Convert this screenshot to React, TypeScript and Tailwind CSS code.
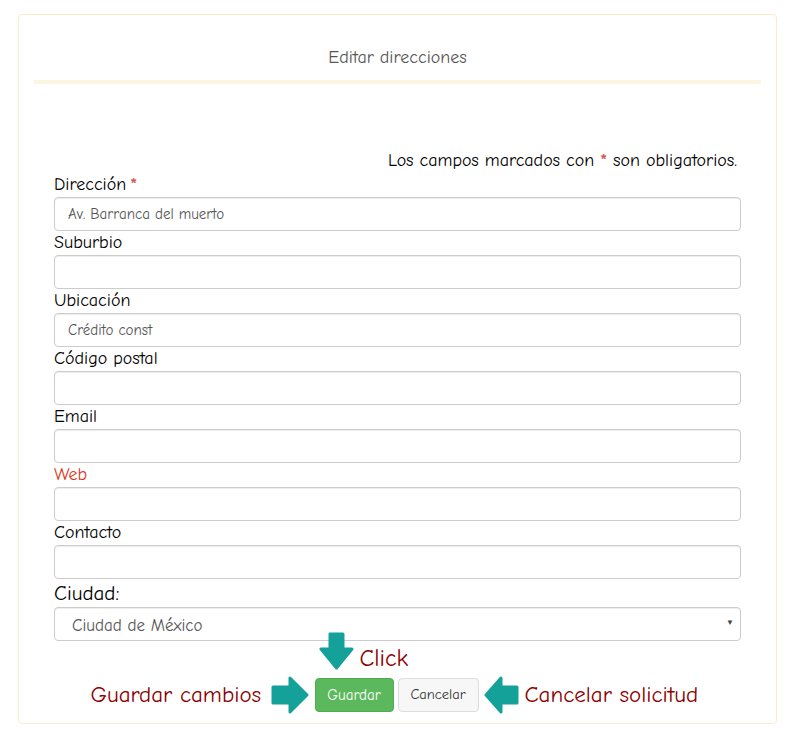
import React from 'react';

const fields = [
  { label: 'Dirección', value: 'Av. Barranca del muerto', required: true },
  { label: 'Suburbio', value: '' },
  { label: 'Ubicación', value: 'Crédito const' },
  { label: 'Código postal', value: '' },
  { label: 'Email', value: '' },
  { label: 'Web', value: '', web: true },
  { label: 'Contacto', value: '' },
];

function DownArrow() {
  return (
    <svg width="35" height="38" viewBox="0 0 35 38">
      <path d="M11 2 H24 V17 H33 L17.5 36 L2 17 H11 Z" fill="#14a19a" stroke="#14a19a" strokeWidth="3" strokeLinejoin="round" />
    </svg>
  );
}

function RightArrow() {
  return (
    <svg width="38" height="38" viewBox="0 0 38 38">
      <path d="M2 11 V27 H19 V36 L36 19 L19 2 V11 Z" fill="#14a19a" stroke="#14a19a" strokeWidth="3" strokeLinejoin="round" />
    </svg>
  );
}

function LeftArrow() {
  return (
    <svg width="35" height="38" viewBox="0 0 35 38">
      <path d="M33 11 V27 H17 V36 L2 19 L17 2 V11 Z" fill="#14a19a" stroke="#14a19a" strokeWidth="3" strokeLinejoin="round" />
    </svg>
  );
}

export default function App() {
  return (
    <div className="min-h-[741px] bg-white pt-[14px] font-['Comic_Sans_MS','Comic_Neue','Open_Sans',sans-serif] text-black">
      <div className="ml-[18px] w-[759px] h-[710px] border border-[#faebcc] rounded bg-white">
        <div className="mx-[15px] pt-[31px] pb-[10px] border-b-4 border-[#fcf5e0] text-center text-[18px] leading-6 text-[#555]">
          Editar direcciones
        </div>

        <div className="px-[35px] pt-[65px]">
          <p className="h-6 pr-1 text-right text-[18px] leading-6 whitespace-nowrap">
            Los campos marcados con <span className="text-[#d9534f] font-bold">*</span> son obligatorios.
          </p>

          {fields.map((f) => (
            <div key={f.label}>
              <label className={`block text-[18px] leading-6 ${f.web ? 'text-[#e0361c]' : 'text-black'}`}>
                {f.label}
                {f.required && <span className="ml-1 text-[#d9534f] font-bold">*</span>}
              </label>
              <input
                readOnly
                value={f.value}
                className="block w-full h-[34px] px-[13px] border border-[#ccc] rounded bg-white text-[15px] text-[#555] shadow-[inset_0_1px_1px_rgba(0,0,0,0.075)] outline-none"
              />
            </div>
          ))}

          <label className="block text-[21px] leading-[28px]">Ciudad:</label>
          <div className="relative h-[34px] border border-[#ccc] rounded bg-white shadow-[inset_0_1px_1px_rgba(0,0,0,0.075)]">
            <span className="absolute left-[17px] top-[5px] text-[17px] text-[#555]">Ciudad de México</span>
            <span className="absolute right-[6px] top-[9px] text-[8px] text-[#444]">▼</span>
          </div>

          <div className="mt-[35px] flex items-center justify-center">
            <span className="w-[170px] text-right text-[23px] leading-[34px] text-[#8b0000] whitespace-nowrap">Guardar cambios</span>
            <span className="ml-[10px] mr-[6px] flex"><RightArrow /></span>
            <div className="relative">
              <div className="absolute left-[4px] top-[-46px] flex">
                <DownArrow />
              </div>
              <span className="absolute left-[45px] top-[-36px] text-[24px] leading-8 text-[#8b0000]">Click</span>
              <button className="w-[79px] h-[34px] rounded bg-[#5cb85c] border border-[#4cae4c] text-[15px] text-white">
                Guardar
              </button>
            </div>
            <button className="ml-1 w-[81px] h-[34px] rounded bg-[#f7f7f7] border border-[#ddd] text-[14.5px] text-[#333]">
              Cancelar
            </button>
            <span className="ml-[5px] mr-[6px] flex"><LeftArrow /></span>
            <span className="w-[180px] text-left text-[23px] leading-[34px] text-[#8b0000] whitespace-nowrap">Cancelar solicitud</span>
          </div>
        </div>
      </div>
    </div>
  );
}
